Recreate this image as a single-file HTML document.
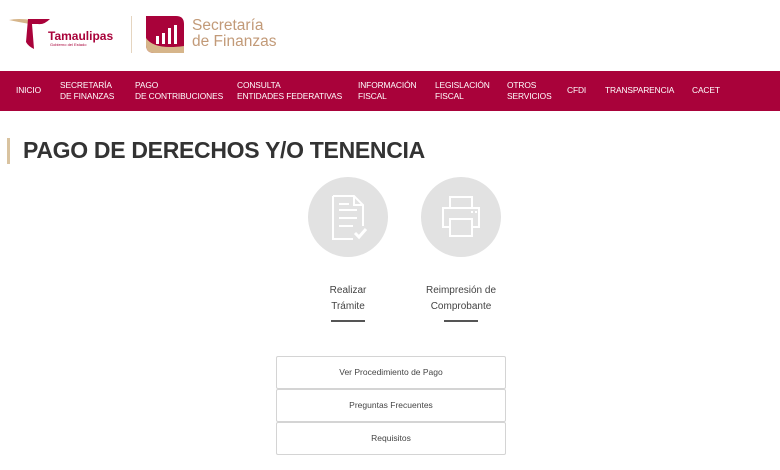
<!DOCTYPE html><html><head><style>
body{margin:0;width:780px;height:470px;background:#fff;font-family:"Liberation Sans",sans-serif;overflow:hidden;position:relative}
.a{position:absolute}
.nav{top:71px;left:0;width:780px;height:40px;background:#a9023a}
.nav div{position:absolute;color:#fff;font-size:8.4px;line-height:11px;top:9px;letter-spacing:-.1px}
.btn{left:276px;width:228px;height:31px;border:1px solid #d4d4d4;border-radius:2px;font-size:8.5px;color:#444;text-align:center;line-height:31px}
.lbl{font-size:10px;color:#444;text-align:center;line-height:16px;width:120px}
.ul{height:1.5px;width:34px;background:#555}
.circ{width:80px;height:80px;border-radius:50%;background:#e2e2e2}
</style></head><body>
<svg class="a" style="left:8px;top:16px" width="45" height="36" viewBox="0 0 45 36">
<path d="M1 4 Q10 2 24 4 L22 8 Q10 6 1 4Z" fill="#d6b58a"/>
<path d="M20 3 L42 3 Q36 9 30 8 L24 8 L26 33 Q20 30 18 26 Z" fill="#a9023a"/>
</svg>
<div class="a" style="left:48px;top:29px;font-weight:bold;font-size:12px;color:#a9023a">Tamaulipas</div>
<div class="a" style="left:50px;top:42px;font-size:4px;color:#a9023a">Gobierno del Estado</div>
<div class="a" style="left:131px;top:16px;width:1px;height:37px;background:#e5d5c0"></div>
<svg class="a" style="left:146px;top:16px" width="38" height="37" viewBox="0 0 38 37">
<path d="M0 0 H30 Q38 0 38 8 V37 H8 Q0 37 0 29Z" fill="#a9023a"/>
<path d="M0 22 Q8 34 38 30 V37 H8 Q0 37 0 29Z" fill="#d6b58a"/>
<rect x="10" y="20" width="3" height="8" fill="#fff"/><rect x="16" y="17" width="3" height="11" fill="#fff"/><rect x="22" y="12" width="3" height="16" fill="#fff"/><rect x="28" y="9" width="3" height="19" fill="#fff"/>
</svg>
<div class="a" style="left:192px;top:18px;font-size:15.5px;line-height:16px;color:#c29a78">Secretaría<br>de Finanzas</div>
<div class="a nav">
<div style="left:16px;top:14px">INICIO</div>
<div style="left:60px">SECRETARÍA<br>DE FINANZAS</div>
<div style="left:135px">PAGO<br>DE CONTRIBUCIONES</div>
<div style="left:237px">CONSULTA<br>ENTIDADES FEDERATIVAS</div>
<div style="left:358px">INFORMACIÓN<br>FISCAL</div>
<div style="left:435px">LEGISLACIÓN<br>FISCAL</div>
<div style="left:507px">OTROS<br>SERVICIOS</div>
<div style="left:567px;top:14px">CFDI</div>
<div style="left:605px;top:14px">TRANSPARENCIA</div>
<div style="left:692px;top:14px">CACET</div>
</div>
<div class="a" style="left:7px;top:138px;width:3px;height:26px;background:#d9c3a0"></div>
<div class="a" style="left:23px;top:137px;font-size:23px;font-weight:bold;color:#333;letter-spacing:-.3px">PAGO DE DERECHOS Y/O TENENCIA</div>
<div class="a circ" style="left:308px;top:177px"></div>
<div class="a circ" style="left:421px;top:177px"></div>
<svg class="a" style="left:308px;top:177px" width="80" height="80" viewBox="0 0 80 80" fill="none" stroke="#fff" stroke-width="2">
<path d="M25 19 H46 L55 28 V49 M46 19 V28 H55 M25 19 V62 H45"/><path d="M31 33H49M31 41H49M31 49H45M31 27H41"/><path d="M47 56 L51 60 L58 52" stroke-width="3"/></svg>
<svg class="a" style="left:421px;top:177px" width="80" height="80" viewBox="0 0 80 80" fill="none" stroke="#fff" stroke-width="2">
<path d="M29 31 V20 H51 V31 M29 50 H22 V31 H58 V50 H51 M29 42 H51 V59 H29 Z"/><path d="M50 35h2M54 35h2"/></svg>
<div class="a lbl" style="left:288px;top:283px">Realizar<br>Trámite</div>
<div class="a ul" style="left:331px;top:320px"></div>
<div class="a lbl" style="left:401px;top:283px">Reimpresión de<br>Comprobante</div>
<div class="a ul" style="left:444px;top:320px"></div>
<div class="a btn" style="top:356px">Ver Procedimiento de Pago</div>
<div class="a btn" style="top:389px">Preguntas Frecuentes</div>
<div class="a btn" style="top:422px">Requisitos</div>
</body></html>
